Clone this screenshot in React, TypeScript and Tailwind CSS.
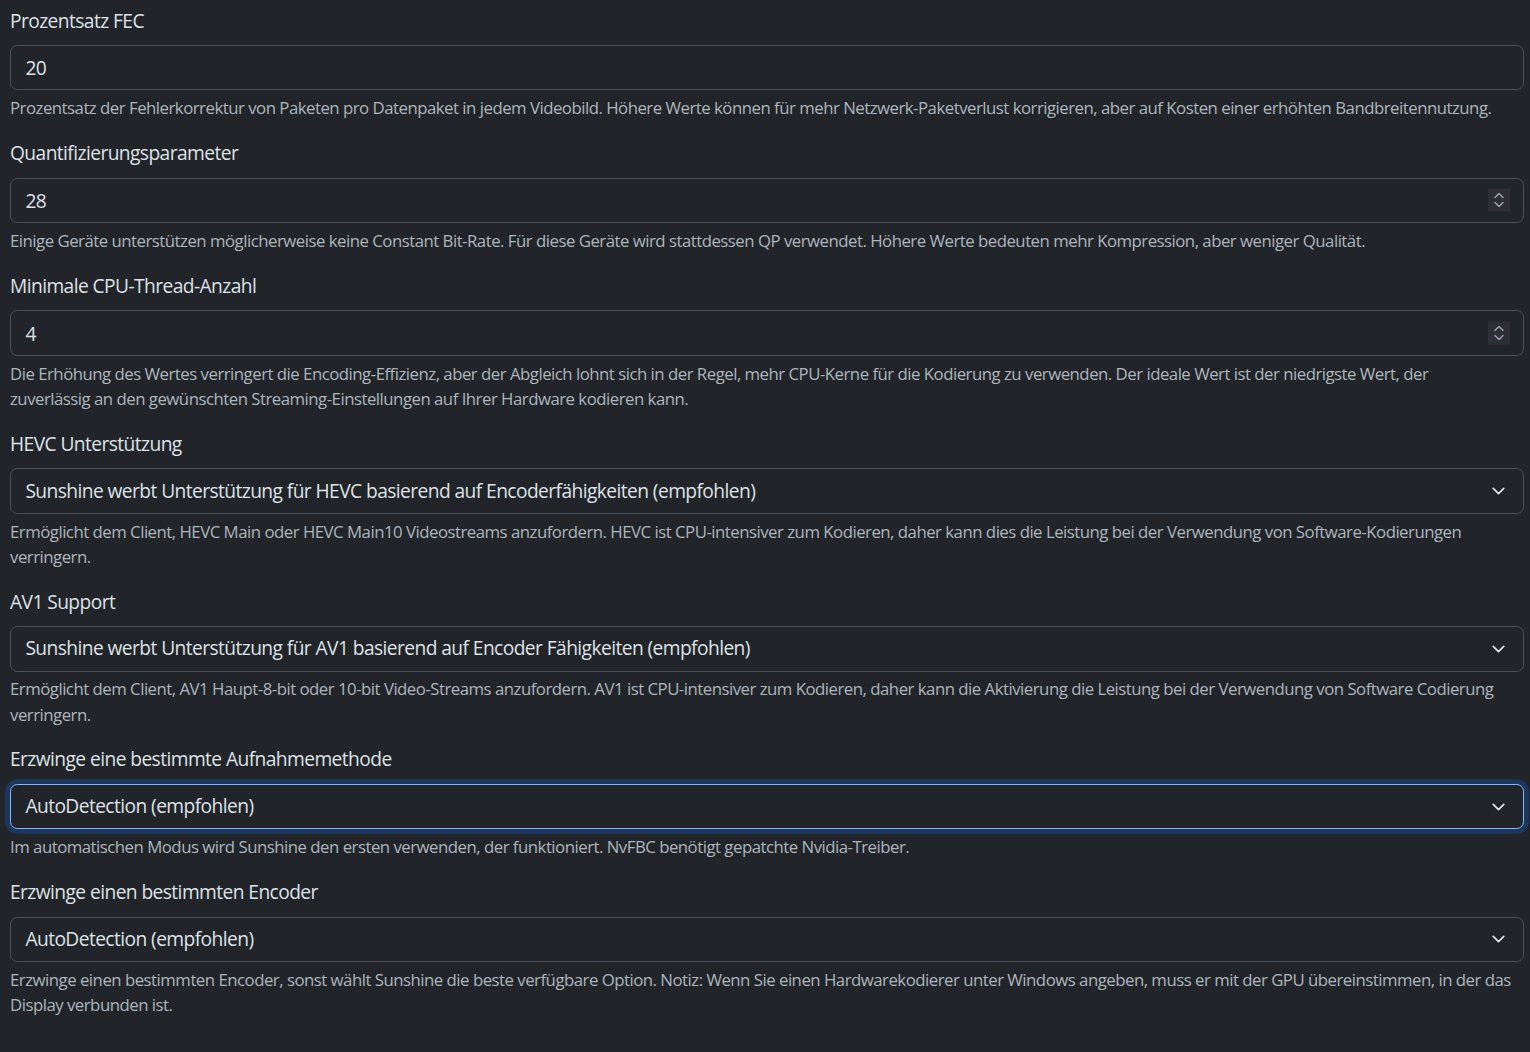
import React from 'react';

type Field = {
  id: string;
  label: string;
  kind: 'text' | 'number' | 'select';
  value: string;
  help: string;
  focused?: boolean;
};

// help texts keep the line breaks of the original layout
const fields: Field[] = [
  {
    id: 'fec_percentage',
    label: 'Prozentsatz FEC',
    kind: 'text',
    value: '20',
    help: 'Prozentsatz der Fehlerkorrektur von Paketen pro Datenpaket in jedem Videobild. Höhere Werte können für mehr Netzwerk-Paketverlust korrigieren, aber auf Kosten einer erhöhten Bandbreitennutzung.',
  },
  {
    id: 'qp',
    label: 'Quantifizierungsparameter',
    kind: 'number',
    value: '28',
    help: 'Einige Geräte unterstützen möglicherweise keine Constant Bit-Rate. Für diese Geräte wird stattdessen QP verwendet. Höhere Werte bedeuten mehr Kompression, aber weniger Qualität.',
  },
  {
    id: 'min_threads',
    label: 'Minimale CPU-Thread-Anzahl',
    kind: 'number',
    value: '4',
    help: 'Die Erhöhung des Wertes verringert die Encoding-Effizienz, aber der Abgleich lohnt sich in der Regel, mehr CPU-Kerne für die Kodierung zu verwenden. Der ideale Wert ist der niedrigste Wert, der\nzuverlässig an den gewünschten Streaming-Einstellungen auf Ihrer Hardware kodieren kann.',
  },
  {
    id: 'hevc_mode',
    label: 'HEVC Unterstützung',
    kind: 'select',
    value: 'Sunshine werbt Unterstützung für HEVC basierend auf Encoderfähigkeiten (empfohlen)',
    help: 'Ermöglicht dem Client, HEVC Main oder HEVC Main10 Videostreams anzufordern. HEVC ist CPU-intensiver zum Kodieren, daher kann dies die Leistung bei der Verwendung von Software-Kodierungen\nverringern.',
  },
  {
    id: 'av1_mode',
    label: 'AV1 Support',
    kind: 'select',
    value: 'Sunshine werbt Unterstützung für AV1 basierend auf Encoder Fähigkeiten (empfohlen)',
    help: 'Ermöglicht dem Client, AV1 Haupt-8-bit oder 10-bit Video-Streams anzufordern. AV1 ist CPU-intensiver zum Kodieren, daher kann die Aktivierung die Leistung bei der Verwendung von Software Codierung\nverringern.',
  },
  {
    id: 'capture',
    label: 'Erzwinge eine bestimmte Aufnahmemethode',
    kind: 'select',
    value: 'AutoDetection (empfohlen)',
    help: 'Im automatischen Modus wird Sunshine den ersten verwenden, der funktioniert. NvFBC benötigt gepatchte Nvidia-Treiber.',
    focused: true,
  },
  {
    id: 'encoder',
    label: 'Erzwinge einen bestimmten Encoder',
    kind: 'select',
    value: 'AutoDetection (empfohlen)',
    help: 'Erzwinge einen bestimmten Encoder, sonst wählt Sunshine die beste verfügbare Option. Notiz: Wenn Sie einen Hardwarekodierer unter Windows angeben, muss er mit der GPU übereinstimmen, in der das\nDisplay verbunden ist.',
  },
];

function Chevron() {
  return (
    <svg width="19" height="14" viewBox="0 0 16 16" fill="none" className="pointer-events-none absolute right-[16px] top-1/2 -translate-y-1/2">
      <path d="m2 5 6 6 6-6" stroke="#dee2e6" strokeWidth="2" strokeLinecap="round" strokeLinejoin="round" />
    </svg>
  );
}

function Spinner() {
  return (
    <div className="pointer-events-none absolute right-[14px] top-1/2 flex h-[23px] w-[22px] -translate-y-1/2 flex-col items-center justify-center gap-[3px] bg-[#2e2f36]">
      <svg width="10" height="6" viewBox="0 0 10 6" fill="none">
        <path d="M1 5 5 1l4 4" stroke="#a4a5ad" strokeWidth="1.4" strokeLinecap="round" strokeLinejoin="round" />
      </svg>
      <svg width="10" height="6" viewBox="0 0 10 6" fill="none">
        <path d="M1 1l4 4 4-4" stroke="#a4a5ad" strokeWidth="1.4" strokeLinecap="round" strokeLinejoin="round" />
      </svg>
    </div>
  );
}

function FormField({ field }: { field: Field }) {
  const base =
    'block w-full h-[45.6px] rounded-[7.2px] border bg-[#212529] pl-[14.4px] text-[19.2px] leading-[28.8px] tracking-[-0.03em] text-[#dee2e6] outline-none appearance-none';
  const border = field.focused
    ? 'border-[#86b7fe] shadow-[0_0_0_4.8px_rgba(13,110,253,0.25)]'
    : 'border-[#495057]';

  return (
    <div className="mb-[18.7px]">
      <label htmlFor={field.id} className="mb-[9.6px] block text-[19.2px] leading-[28.8px] tracking-[-0.03em] text-[#dee2e6]">
        {field.label}
      </label>
      <div className="relative">
        {field.kind === 'select' ? (
          <>
            <select id={field.id} defaultValue={field.value} className={`${base} ${border} pr-[43px]`}>
              <option>{field.value}</option>
            </select>
            <Chevron />
          </>
        ) : (
          <>
            <input id={field.id} type="text" defaultValue={field.value} className={`${base} ${border} pr-[14.4px]`} />
            {field.kind === 'number' && <Spinner />}
          </>
        )}
      </div>
      <div className="mt-[4.8px] whitespace-pre-line text-[16.8px] leading-[25.2px] tracking-[-0.03em] text-[#adb5bd]">
        {field.help}
      </div>
    </div>
  );
}

export default function App() {
  return (
    <div
      className="min-h-screen bg-[#212529] px-[10px] pt-[6.5px] pb-4 [color-scheme:dark]"
      style={{ fontFamily: '"Open Sans", "Noto Sans", sans-serif' }}
    >
      <div className="w-[1514px]">
        {fields.map((f) => (
          <FormField key={f.id} field={f} />
        ))}
      </div>
    </div>
  );
}
